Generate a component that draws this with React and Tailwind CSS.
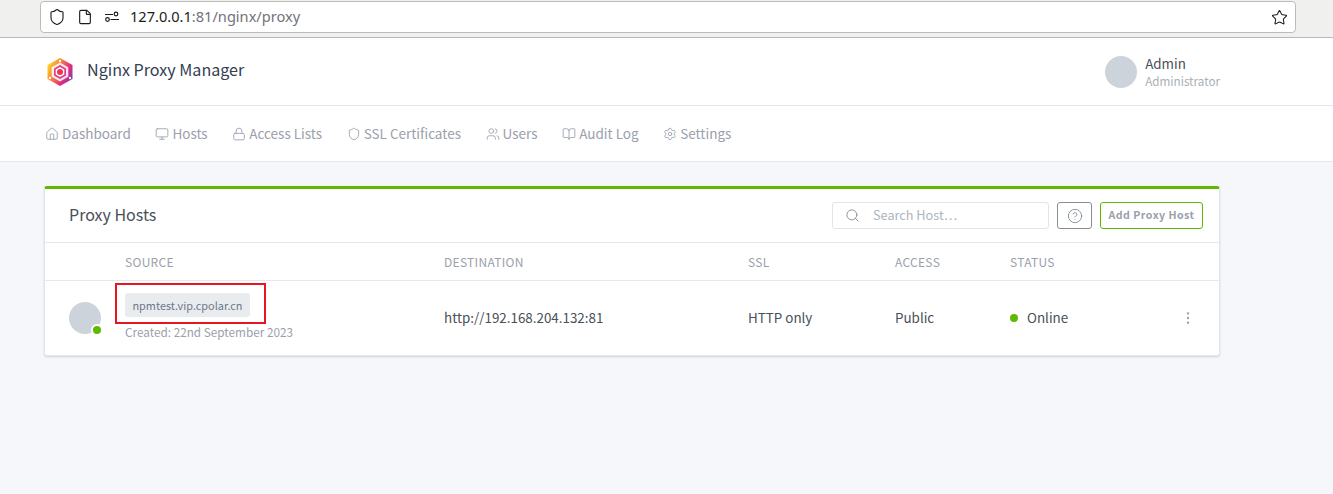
import { Shield, File, Home, Monitor, Lock, Users, BookOpen, Settings, Search, CircleHelp, Star, EllipsisVertical } from 'lucide-react';

const navItems = [
  { label: 'Dashboard', icon: Home },
  { label: 'Hosts', icon: Monitor },
  { label: 'Access Lists', icon: Lock },
  { label: 'SSL Certificates', icon: Shield },
  { label: 'Users', icon: Users },
  { label: 'Audit Log', icon: BookOpen },
  { label: 'Settings', icon: Settings },
];

const columns = 'grid grid-cols-[80px_319px_304px_147px_115px_1fr]';

const Logo = () => (
  <svg width="30" height="30" viewBox="0 0 30 30">
    <defs>
      <linearGradient id="npm" x1="0" y1="0.2" x2="1" y2="0.8">
        <stop offset="0" stopColor="#fbe02a" />
        <stop offset="0.35" stopColor="#f9823a" />
        <stop offset="0.7" stopColor="#e52b7f" />
        <stop offset="1" stopColor="#7b3fa8" />
      </linearGradient>
    </defs>
    <polygon points="15,1 27.5,8 27.5,22 15,29 2.5,22 2.5,8" fill="url(#npm)" />
    <polygon points="15,5.5 23.3,10.2 23.3,19.8 15,24.5 6.7,19.8 6.7,10.2" fill="#fff" fillOpacity="0.85" />
    <polygon points="15,8 21,11.5 21,18.5 15,22 9,18.5 9,11.5" fill="#d8408a" />
    <polygon points="15,10 19.3,12.5 19.3,17.5 15,20 10.7,17.5 10.7,12.5" fill="#fff" />
    <circle cx="15" cy="15" r="3" fill="#f0344a" />
    <circle cx="15" cy="4" r="1.2" fill="#fff" />
    <circle cx="5" cy="21" r="1.2" fill="#fff" />
    <circle cx="25" cy="21" r="1.2" fill="#fff" />
  </svg>
);

const BrowserBar = () => (
  <div className="h-[38px] bg-[#f0f0ef] border-b border-[#b9b9b8] pt-px pl-[40px] pr-[37px]">
    <div className="h-[32px] bg-white border border-[#bcbcbc] rounded-[4px] flex items-center pl-[7px] pr-[7px] font-['Noto_Sans',sans-serif]">
      <Shield size={18} strokeWidth={1.5} className="text-[#1d1d20]" />
      <File size={16} strokeWidth={1.7} className="text-[#1d1d20] ml-[11px]" />
      <svg width="16" height="16" viewBox="0 0 16 16" fill="none" stroke="#1d1d20" strokeWidth="1.2" className="ml-[11px]">
        <circle cx="3.5" cy="10.5" r="1.8" />
        <circle cx="12" cy="5" r="1.8" />
        <path d="M1 5.5h8M6.5 10.5h8.5" />
      </svg>
      <span className="ml-[10px] mb-[1px] text-[14.6px] text-[#1d1d20]">
        127.0.0.1<span className="text-[#73737a]">:81/nginx/proxy</span>
      </span>
      <Star size={17} strokeWidth={1.5} className="text-[#1d1d20] ml-auto" />
    </div>
  </div>
);

const Header = () => (
  <div className="h-[68px] bg-white border-b border-[#e6e8ee] pl-[45px] pr-[113px] flex items-center">
    <Logo />
    <span className="ml-[12px] mb-[5px] text-[16.1px] text-[#354052] font-normal">Nginx Proxy Manager</span>
    <div className="ml-auto flex items-center">
      <div className="w-[32px] h-[32px] rounded-full bg-[#cdd3da]" />
      <div className="ml-[8px] flex flex-col leading-[18px]">
        <span className="text-[13.4px] text-[#495057]">Admin</span>
        <span className="text-[11.7px] text-[#aab0b6]">Administrator</span>
      </div>
    </div>
  </div>
);

const Nav = () => (
  <div className="h-[56px] bg-white border-b border-[#e6e8ee] pl-[45px] flex items-center gap-[24.6px]">
    {navItems.map(({ label, icon: Icon }) => (
      <div key={label} className="flex items-center gap-[3px] text-[13.5px] text-[#9aa0ac]">
        <Icon size={14} strokeWidth={1.5} />
        <span>{label}</span>
      </div>
    ))}
  </div>
);

const ProxyCard = () => (
  <div className="relative w-[1176px] bg-white border border-[#e3e6ec] border-t-[3px] border-t-[#5eba00] rounded-[3px] shadow-[0_1px_2px_rgba(60,70,90,0.2)]">
    <div className="h-[54px] border-b border-[#e6e8ee] pl-[24px] pr-[16px] flex items-center">
      <h1 className="mb-[4px] text-[16px] font-normal text-[#495057]">Proxy Hosts</h1>
      <div className="ml-auto flex items-center">
        <div className="w-[217px] h-[27px] border border-[#e0e5ec] rounded-[3px] flex items-center pl-[12px]">
          <Search size={15} strokeWidth={1.5} className="text-[#868e96]" />
          <span className="ml-[13px] mb-[2px] text-[12.7px] text-[#adb5bd]">Search Host…</span>
        </div>
        <div className="ml-[8px] w-[35px] h-[27px] border border-[#868e96] rounded-[3px] flex items-center justify-center">
          <CircleHelp size={16} strokeWidth={1.4} className="text-[#868e96]" />
        </div>
        <div className="ml-[8px] w-[103px] h-[27px] pb-[2px] border border-[#5eba00] rounded-[3px] flex items-center justify-center text-[10.6px] font-semibold tracking-[0.5px] text-[#9aa0ac]">
          Add Proxy Host
        </div>
      </div>
    </div>
    <div className={`${columns} h-[38px] pt-px border-b border-[#e6e8ee] items-center text-[12px] tracking-[0.3px] text-[#9aa0ac]`}>
      <span />
      <span>SOURCE</span>
      <span>DESTINATION</span>
      <span>SSL</span>
      <span>ACCESS</span>
      <span>STATUS</span>
    </div>
    <div className={`${columns} h-[74px] items-center text-[13.4px] text-[#495057]`}>
      <div className="pl-[24px]">
        <div className="relative w-[32px] h-[32px] rounded-full bg-[#cdd3da]">
          <span className="absolute right-[-2px] bottom-[-2px] w-[12px] h-[12px] rounded-full bg-[#5eba00] border-2 border-white" />
        </div>
      </div>
      <div className="flex flex-col items-start pb-[3px]">
        <span className="h-[24px] w-[125px] flex items-center justify-center rounded-[3px] bg-[#e9ecef] text-[10.9px] text-[#6e7687]">npmtest.vip.cpolar.cn</span>
        <span className="mt-[7px] text-[11.75px] leading-[16px] text-[#9aa0ac]">Created: 22nd September 2023</span>
      </div>
      <span className="mb-[2px]">http://192.168.204.132:81</span>
      <span className="mb-[2px]">HTTP only</span>
      <span className="mb-[2px]">Public</span>
      <div className="flex items-center">
        <span className="w-[8px] h-[8px] rounded-full bg-[#5eba00]" />
        <span className="ml-[9px] mb-[2px]">Online</span>
        <EllipsisVertical size={16} strokeWidth={1.6} className="ml-auto mr-[23px] text-[#9aa0ac]" />
      </div>
    </div>
    <div className="absolute left-[70px] top-[94px] w-[151px] h-[41px] border-2 border-[#e8141f]" />
  </div>
);

export default function App() {
  return (
    <div className="h-[494px] overflow-hidden bg-[#f5f7fb] font-['Noto_Sans_CJK_SC','Noto_Sans',sans-serif]">
      <BrowserBar />
      <Header />
      <Nav />
      <div className="pt-[24px] pl-[44px]">
        <ProxyCard />
      </div>
    </div>
  );
}
